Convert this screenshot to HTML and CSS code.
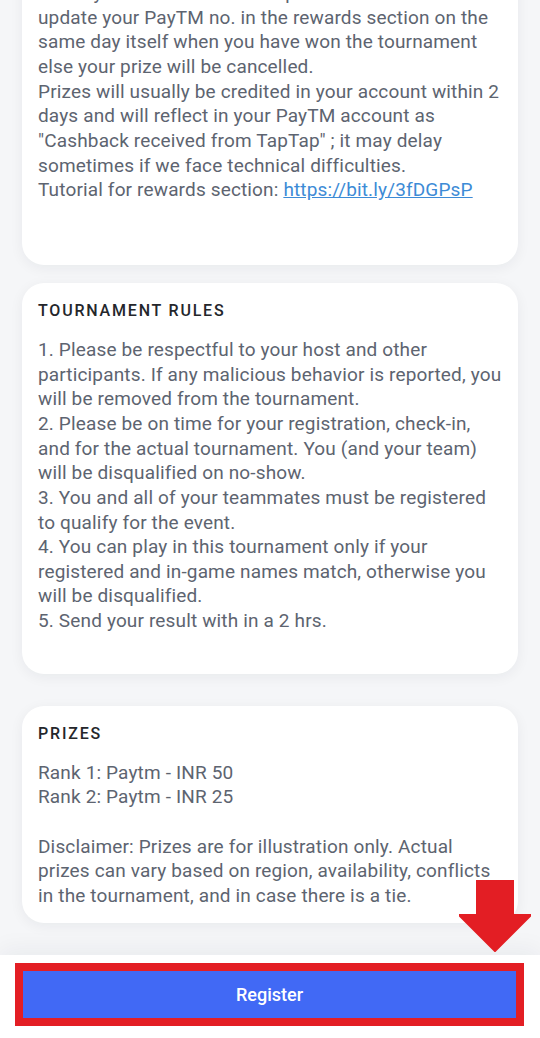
FILE: index.html
```html
<!DOCTYPE html>
<html lang="en">
<head>
  <meta charset="UTF-8" />
  <meta name="viewport" content="width=device-width, initial-scale=1" />
  <title>Tournament Details</title>
  <link rel="stylesheet" href="styles.css">
</head>
<body>

  <!-- Scrolled details -->
  <main class="details">

    <section class="info-card info-card--rewards">
      <p class="info-text">
        which you can find in left swipe drawer. You need to update your PayTM no. in the rewards section on the same day itself when you have won the tournament else your prize will be cancelled.<br>
        Prizes will usually be credited in your account within 2 days and will reflect in your PayTM account as "Cashback received from TapTap" ; it may delay sometimes if we face technical difficulties.<br>
        Tutorial for rewards section: <a href="#">https://bit.ly/3fDGPsP</a>
      </p>
    </section>

    <section class="info-card info-card--rules">
      <h4 class="info-title">TOURNAMENT RULES</h4>
      <p class="info-text">
        1. Please be respectful to your host and other participants. If any malicious behavior is reported, you will be removed from the tournament.<br>
        2. Please be on time for your registration, check-in, and for the actual tournament. You (and your team) will be disqualified on no-show.<br>
        3. You and all of your teammates must be registered to qualify for the event.<br>
        4. You can play in this tournament only if your registered and in-game names match, otherwise you will be disqualified.<br>
        5. Send your result with in a 2 hrs.
      </p>
    </section>

    <section class="info-card info-card--prizes">
      <h4 class="info-title">PRIZES</h4>
      <p class="info-text">
        Rank 1: Paytm - INR 50<br>
        Rank 2: Paytm - INR 25<br>
        <br>
        Disclaimer: Prizes are for illustration only. Actual prizes can vary based on region, availability, conflicts in the tournament, and in case there is a tie.
      </p>
    </section>

  </main>

  <!-- Bottom action bar -->
  <footer class="action-bar">
    <button class="register-btn">Register</button>
  </footer>

  <!-- Annotation arrow -->
  <div class="hint-arrow">
    <svg width="72" height="72" viewBox="0 0 72 72">
      <path d="M18 0 H54 V35 H72 L36 71 L0 35 H18 Z" fill="#e31e24" stroke="#e31e24" stroke-width="2" stroke-linejoin="round"/>
    </svg>
  </div>

</body>
</html>
```

FILE: styles.css
```css
/* Reset & General */
body, html {
  margin: 0;
  padding: 0;
  font-family: Roboto, "Noto Sans", sans-serif;
  background: #f5f6f8;
  height: 100vh;
  overflow: hidden;
}

/* Details list (scrolled part way down) */
.details {
  padding: 0 22px;
  margin-top: -35px;
}

.info-card {
  background: #fff;
  border-radius: 22px;
  padding: 17px 16px 16px;
  box-shadow: 0 3px 14px rgba(20, 30, 50, 0.06);
}

.info-card--rewards {
  padding-top: 16px;
  padding-bottom: 62px;
}
.info-card--rules {
  margin-top: 18px;
  padding-bottom: 40px;
}
.info-card--prizes {
  margin-top: 32px;
  padding-bottom: 14px;
}

.info-title {
  margin: 0 0 16px;
  font-size: 16px;
  line-height: 22px;
  font-weight: 500;
  letter-spacing: 1.8px;
  color: #24262b;
}

.info-text {
  margin: 0;
  font-size: 19px;
  line-height: 24.65px;
  letter-spacing: 0.15px;
  color: #5d6470;
}
.info-text a {
  color: #3d8bd6;
  text-decoration: underline;
}

/* Bottom action bar */
.action-bar {
  position: fixed;
  left: 0;
  right: 0;
  bottom: 0;
  height: 83px;
  background: #fff;
  box-shadow: 0 -6px 22px rgba(20, 30, 50, 0.05);
  padding: 16px 24px 0 23px;
  box-sizing: border-box;
}

.register-btn {
  display: block;
  width: 100%;
  height: 47px;
  border: none;
  background: #4169f5;
  color: #fff;
  font-family: Roboto, sans-serif;
  font-size: 18px;
  font-weight: 500;
  outline: 8px solid #e31e24;
  cursor: pointer;
}

/* Annotation */
.hint-arrow {
  position: fixed;
  left: 459px;
  top: 880px;
  width: 72px;
  height: 72px;
}
.hint-arrow svg {
  display: block;
}
```
